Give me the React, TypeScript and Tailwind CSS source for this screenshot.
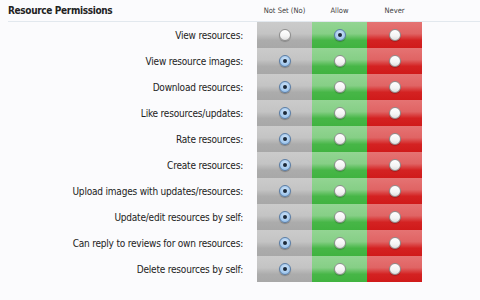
import React from "react";

type Choice = "unset" | "allow" | "never";

const permissions: { label: string; value: Choice }[] = [
  { label: "View resources:", value: "allow" },
  { label: "View resource images:", value: "unset" },
  { label: "Download resources:", value: "unset" },
  { label: "Like resources/updates:", value: "unset" },
  { label: "Rate resources:", value: "unset" },
  { label: "Create resources:", value: "unset" },
  { label: "Upload images with updates/resources:", value: "unset" },
  { label: "Update/edit resources by self:", value: "unset" },
  { label: "Can reply to reviews for own resources:", value: "unset" },
  { label: "Delete resources by self:", value: "unset" },
];

const cellStyles: Record<Choice, string> = {
  unset: "bg-[linear-gradient(to_bottom,#cbcbcb_0%,#c4c4c4_45%,#acacac_70%,#a8a8a8_100%)]",
  allow: "bg-[linear-gradient(to_bottom,#93d593_0%,#86cf86_45%,#47b647_70%,#40b340_100%)]",
  never: "bg-[linear-gradient(to_bottom,#e57373_0%,#e06464_45%,#d42222_70%,#d01a1a_100%)]",
};

function Radio({ checked }: { checked: boolean }) {
  if (checked) {
    return (
      <span className="flex size-[12px] items-center justify-center rounded-full border border-[#5b7ea6] bg-[radial-gradient(circle_at_50%_40%,#d6e8fa_0%,#9cc4ec_70%,#7eaee0_100%)] shadow-[0_1px_1px_rgba(0,0,0,0.25)]">
        <span className="size-[4px] rounded-full bg-[#1c2a3a]" />
      </span>
    );
  }
  return (
    <span className="block size-[12px] rounded-full border border-[#8e8e8e] bg-[linear-gradient(to_bottom,#ffffff_0%,#f4f4f4_60%,#dedede_100%)] shadow-[0_1px_1px_rgba(0,0,0,0.2)]" />
  );
}

function PermissionRow({ label, value }: { label: string; value: Choice }) {
  return (
    <div className="flex h-[26px]">
      <div className="flex w-[249px] items-center justify-end pr-[14px] text-[10px] tracking-[-0.2px] text-[#222]">
        {label}
      </div>
      {(["unset", "allow", "never"] as Choice[]).map((c) => (
        <div key={c} className={`flex w-[55px] items-center justify-center ${cellStyles[c]}`}>
          <Radio checked={value === c} />
        </div>
      ))}
    </div>
  );
}

export default function App() {
  return (
    <div
      className="h-[300px] w-[480px] overflow-hidden bg-[#fbfbfd] pl-2"
      style={{ fontFamily: '"DejaVu Sans Condensed", "DejaVu Sans", sans-serif' }}
    >
      <div className="flex h-[22px] items-center border-b border-[#e2e8ee]">
        <div className="w-[249px] text-[10px] font-bold tracking-[-0.35px] text-[#222]">Resource Permissions</div>
        <div className="w-[55px] text-center text-[7.5px] text-[#444]">Not Set (No)</div>
        <div className="w-[55px] text-center text-[7.5px] text-[#444]">Allow</div>
        <div className="w-[55px] text-center text-[7.5px] text-[#444]">Never</div>
      </div>

      <div className="flex flex-col">
        {permissions.map((p) => (
          <PermissionRow key={p.label} label={p.label} value={p.value} />
        ))}
      </div>

      <div className="mt-[15px] text-[10px] font-bold tracking-[-0.35px] text-[#222]">
        Resource Moderator Permissions
      </div>
    </div>
  );
}
